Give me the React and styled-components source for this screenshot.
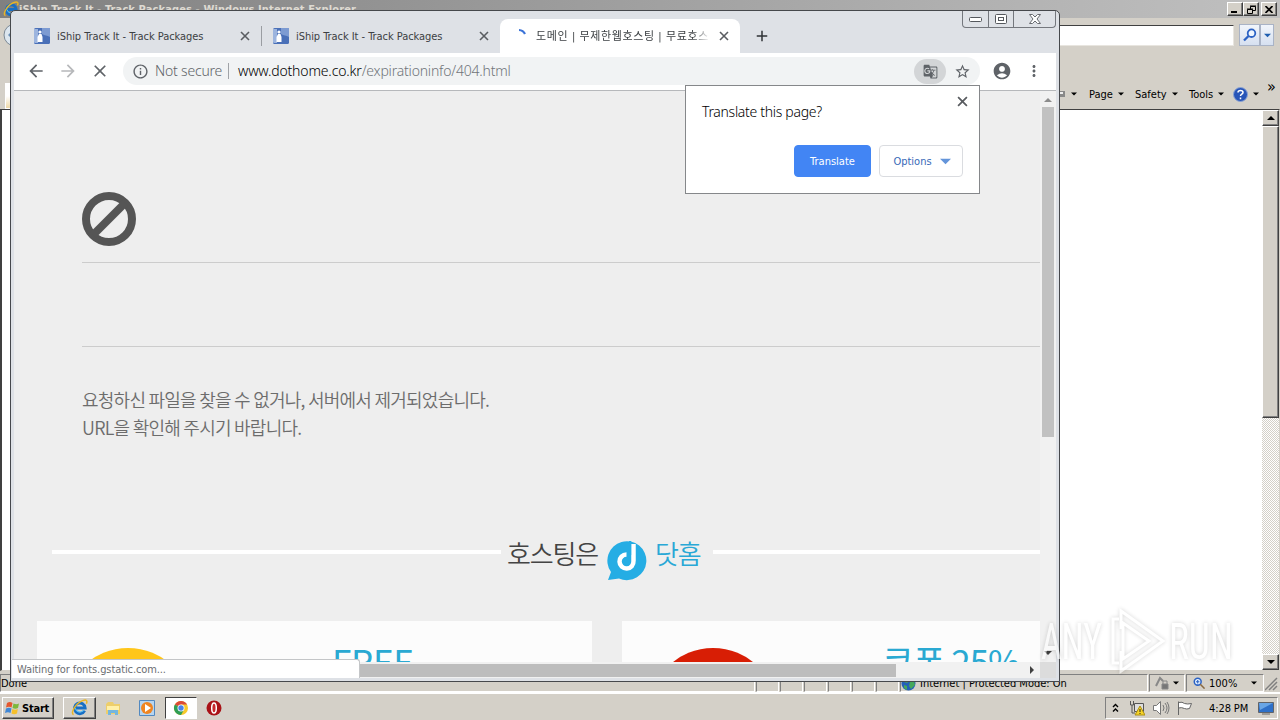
import React from 'react'
import styled, { createGlobalStyle, css } from 'styled-components'
import {
    MdArrowBack, MdArrowForward, MdClose, MdInfoOutline, MdGTranslate,
    MdStarBorder, MdAccountCircle, MdMoreVert, MdAdd
} from 'react-icons/md'

const GlobalStyle = createGlobalStyle`
    * {
        box-sizing: border-box;
    }

    body {
        margin: 0;
        overflow: hidden;
        font-family: 'DejaVu Sans Condensed', 'DejaVu Sans', 'Noto Sans CJK KR', sans-serif;
        font-stretch: condensed;
        font-size: 11px;
        line-height: 14px;
        color: #000;
    }

    svg {
        display: block;
        flex: none;
    }
`;

const raised = css`
    border: 1px solid;
    border-color: #fff #404040 #404040 #fff;
    box-shadow: inset -1px -1px 0 #808080;
`;

const Desktop = styled.div`
    position: relative;
    display: flex;
    flex-direction: column;
    width: 1280px;
    height: 720px;
    overflow: hidden;
    background: #d4d0c8;
`;

const Label = styled.span`
    flex: none;
    padding-top: 2px;
    white-space: nowrap;
    letter-spacing: ${props => props.$spacing || 0}px;
`;

/* Internet Explorer */

const ExplorerTitle = styled.div`
    display: flex;
    align-items: center;
    height: 18px;
    padding: 0 3px;
    background: linear-gradient(90deg, #808080, #c0c0c0);
    color: #dedad2;
    font-weight: bold;
`;

const TitleButtons = styled.div`
    display: flex;
    margin-left: auto;
`;

const TitleButton = styled.div`
    ${raised}
    display: flex;
    align-items: center;
    justify-content: center;
    width: 16px;
    height: 14px;
    margin-left: ${props => props.$gap || 0}px;
    background: #d4d0c8;
`;

const AddressRow = styled.div`
    display: flex;
    align-items: center;
    height: 34px;
    padding: 0 6px 0 3px;
`;

const SearchField = styled.div`
    width: 180px;
    height: 21px;
    margin: 0 5px 0 auto;
    background: #fff;
    border: 1px solid #e8e5df;
    border-top-color: #404040;
`;

const SearchButton = styled.div`
    display: flex;
    align-items: center;
    justify-content: center;
    width: ${props => props.$width}px;
    height: 22px;
    border: 1px solid #a9b3c6;
    background: linear-gradient(#f1f5fb, #d6e0f0);
`;

const CommandRow = styled.div`
    display: flex;
    align-items: flex-end;
    height: 57px;
    padding-left: 5px;
`;

const TabStub = styled.div`
    width: 30px;
    height: 26px;
    border: 1px solid #fff;
    background: linear-gradient(#fff 50%, #efd9a8);
`;

const Commands = styled.div`
    display: flex;
    align-items: center;
    height: 30px;
    margin-left: auto;
    width: 222px;
`;

const Command = styled.div`
    display: flex;
    align-items: center;
    gap: 5px;
    width: ${props => props.$width}px;
`;

const Spacer = styled.div`
    flex: none;
    width: ${props => props.$width}px;
`;

const Chevron = styled.span`
    margin: 3px 0 0 1px;
    font-size: 16px;
    line-height: 10px;
    align-self: flex-start;
    letter-spacing: -1px;
`;

const ExplorerPage = styled.div`
    display: flex;
    justify-content: flex-end;
    height: 562px;
    background: #fff;
    border: 1px solid #404040;
    border-width: 1px 1px 1px 2px;
    border-right-color: #d4d0c8;
    border-bottom-color: #d4d0c8;
`;

const ExplorerScroll = styled.div`
    display: flex;
    flex-direction: column;
    width: 17px;
    background: repeating-conic-gradient(#fff 0 25%, #d4d0c8 0 50%) 0 0 / 2px 2px;
`;

const ScrollPart = styled.div`
    ${raised}
    display: flex;
    align-items: center;
    justify-content: center;
    height: ${props => props.$height}px;
    margin-top: ${props => props.$push ? 'auto' : 0};
    background: #d4d0c8;
`;

const StatusBar = styled.div`
    display: flex;
    align-items: stretch;
    height: 22px;
    padding: 3px 0 0;
    border-bottom: 1px solid #fff;
`;

const StatusPane = styled.div`
    display: flex;
    align-items: center;
    gap: 4px;
    width: ${props => props.$width}px;
    padding-left: ${props => props.$inset || 0}px;
    border: 1px solid #808080;
    border-right-color: #fff;
    border-bottom-color: #fff;
    margin-right: 1px;
`;

/* Taskbar */

const Taskbar = styled.div`
    display: flex;
    align-items: center;
    height: 27px;
    padding: 1px 2px 0;
    border-top: 1px solid #fff;
`;

const StartButton = styled.div`
    ${raised}
    display: flex;
    align-items: center;
    gap: 2px;
    width: 52px;
    height: 22px;
    padding-left: 2px;
    font-weight: bold;
`;

const TaskItem = styled.div`
    display: flex;
    align-items: center;
    justify-content: center;
    width: ${props => props.$width || 34}px;
    height: 22px;
    margin-left: ${props => props.$gap || 0}px;
    ${props => props.$open && raised}
    ${props => props.$active && css`
        border: 1px solid;
        border-color: #404040 #fff #fff #404040;
        background: #fff;
    `}
`;

const Tray = styled.div`
    display: flex;
    align-items: center;
    width: 173px;
    height: 22px;
    margin-left: auto;
    padding-left: 6px;
    border: 1px solid;
    border-color: #808080 #fff #fff #808080;
`;

const Clock = styled.span`
    margin: 0 10px 0 15px;
    padding-top: 2px;
    letter-spacing: -0.1px;
    white-space: nowrap;
`;

/* Chrome */

const ChromeWindow = styled.div`
    position: absolute;
    left: 10px;
    top: 10px;
    display: flex;
    flex-direction: column;
    width: 1050px;
    height: 672px;
    padding: 0 3px 3px;
    overflow: hidden;
    border: 1px solid #46484c;
    border-radius: 5px 5px 1px 1px;
    background: #dee1e6;
`;

const TabStrip = styled.div`
    display: flex;
    align-items: flex-end;
    height: 42px;
    padding-left: 8px;
    color: #3c4043;
`;

const Tab = styled.div`
    display: flex;
    align-items: center;
    width: ${props => props.$active ? 240 : 239}px;
    height: 34px;
    padding: 0 11px 0 12px;
    border-radius: 8px 8px 0 0;
    background: ${props => props.$active ? '#fff' : 'transparent'};
`;

const TabTitle = styled.div`
    flex: 1;
    margin: 0 9px 0 7px;
    padding-top: 2px;
    overflow: hidden;
    white-space: nowrap;
    letter-spacing: -0.05px;
    ${props => props.$fade && css`
        margin: 0 9px 0 8px;
        letter-spacing: 0.6px;
        mask-image: linear-gradient(90deg, #000 90%, transparent);
    `}
`;

const TabDivider = styled.div`
    width: 1px;
    height: 20px;
    margin: 0 -1px 7px 0;
    background: #9a9da2;
`;

const NewTab = styled.div`
    padding: 0 0 8px 13px;
`;

const WindowButtons = styled.div`
    display: flex;
    align-self: flex-start;
    height: 17px;
    margin-left: auto;
    border: 1px solid #74777d;
    border-top: 0;
    border-radius: 0 0 4px 4px;
`;

const WindowButton = styled.div`
    display: flex;
    align-items: center;
    justify-content: center;
    width: ${props => props.$width}px;

    & + & {
        border-left: 1px solid #74777d;
    }
`;

const Toolbar = styled.div`
    display: flex;
    align-items: center;
    height: 38px;
    padding: 0 0 1px 13px;
    background: #fff;
    border-bottom: 1px solid #b6b8bb;
    color: #5f6368;
`;

const ToolIcon = styled.div`
    display: flex;
    justify-content: center;
    width: 32px;
    padding-right: 14px;
    opacity: ${props => props.$dim ? 0.45 : 1};
`;

const Omnibox = styled.div`
    display: flex;
    align-items: center;
    width: 857px;
    height: 28px;
    padding: 0 9px 0 9px;
    border-radius: 14px;
    background: #f1f3f4;
`;

const OmniText = styled.span`
    flex: none;
    font-family: 'Noto Sans', sans-serif;
    font-stretch: normal;
    font-weight: 300;
    font-size: 14px;
    line-height: 18px;
    white-space: nowrap;
    letter-spacing: ${props => props.$spacing}px;
    color: ${props => props.$color || '#5f6368'};
`;

const OmniDivider = styled.div`
    flex: none;
    width: 1px;
    height: 16px;
    margin: 0 9px 0 auto;
    background: #a0a3a7;
`;

const SecurityChip = styled.div`
    display: flex;
    align-items: center;
    gap: 6px;
    width: 106px;
`;

const TranslateBadge = styled.div`
    display: flex;
    align-items: center;
    justify-content: center;
    width: 32px;
    height: 25px;
    margin: 0 8px 0 auto;
    border-radius: 13px;
    background: #d3d5d7;
`;

const Viewport = styled.div`
    display: grid;
    grid-template-columns: 1026px 16px;
    grid-template-rows: 571px 16px;
    background: #dcdcdc;
`;

const Page = styled.div`
    overflow: hidden;
    background: #eee;
    font-family: 'Noto Sans CJK KR', sans-serif;
    font-weight: 300;
`;

const ErrorBlock = styled.div`
    padding: 101px 0 0 68px;
`;

const Rule = styled.div`
    height: ${props => props.$height}px;
    border-bottom: 1px solid #ccc;
`;

const Message = styled.p`
    margin: 38px 0 0;
    color: #6c6c6c;
    font-size: 18px;
    font-weight: 350;
    line-height: 28px;
    letter-spacing: -0.75px;
    white-space: nowrap;
`;

const BrandRow = styled.div`
    display: flex;
    align-items: center;
    height: 50px;
    margin: 86px 0 0 38px;
    font-size: 26px;
    line-height: 40px;
    white-space: nowrap;
`;

const BrandLine = styled.div`
    width: ${props => props.$width}px;
    flex: none;
    height: 4px;
    background: #fff;
`;

const BrandText = styled.span`
    flex: none;
    width: ${props => props.$width}px;
    margin-left: ${props => props.$left}px;
    padding-top: 2px;
    font-weight: 350;
    letter-spacing: -1.2px;
    color: ${props => props.$color};
`;

const BrandLogo = styled.svg`
    margin-top: 18px;
`;

const Cards = styled.div`
    display: flex;
    gap: 30px;
    margin: 44px 0 0 23px;
`;

const Card = styled.div`
    display: flex;
    flex: none;
    width: 555px;
    height: 200px;
    padding: 27px 0 0 27px;
    background: #fcfcfc;
`;

const Disc = styled.div`
    flex: none;
    width: 128px;
    height: 128px;
    border-radius: 50%;
    background: ${props => props.$color};
`;

const CardTitle = styled.div`
    margin: -9px 0 0 ${props => props.$left}px;
    color: #2aa9d2;
    font-size: 35px;
    line-height: 44px;
    font-weight: 400;
    letter-spacing: ${props => props.$spacing}px;
    white-space: nowrap;
`;

const VerticalBar = styled.div`
    display: flex;
    flex-direction: column;
    align-items: center;
    justify-content: space-between;
    padding: 5px 0 5px;
    background: #f1f1f1;
`;

const VerticalThumb = styled.div`
    width: 12px;
    height: 330px;
    margin: 3px 0 auto;
    background: #c1c1c1;
`;

const HorizontalBar = styled.div`
    display: flex;
    align-items: center;
    justify-content: space-between;
    padding-right: 4px;
    background: #f1f1f1;
`;

const HorizontalThumb = styled.div`
    width: 537px;
    height: 13px;
    margin-left: 345px;
    background: #bdbdbd;
`;

const StatusBubble = styled.div`
    position: absolute;
    left: 1px;
    bottom: 3px;
    width: 348px;
    height: 19px;
    padding: 3px 0 0 5px;
    border: solid #c4c6c8;
    border-width: 1px 1px 0 0;
    border-radius: 0 3px 0 0;
    background: #fff;
    color: #6a6d71;
    letter-spacing: -0.1px;
`;

const TranslateBubble = styled.div`
    position: absolute;
    left: 674px;
    top: 74px;
    display: flex;
    flex-direction: column;
    justify-content: space-between;
    width: 295px;
    height: 109px;
    padding: 7px 16px 16px;
    border: 1px solid #85878a;
    background: #fff;
`;

const BubbleHeader = styled.div`
    display: flex;
    justify-content: space-between;
    margin-right: -5px;
    color: #5a5d61;
`;

const BubbleClose = styled.div`
    padding-top: 3px;
`;

const BubbleTitle = styled.div`
    margin-top: 11px;
    color: #000;
    font-family: 'Noto Sans', sans-serif;
    font-stretch: normal;
    font-weight: 300;
    font-size: 14px;
    line-height: 16px;
    letter-spacing: -0.3px;
`;

const BubbleActions = styled.div`
    display: flex;
    justify-content: flex-end;
    gap: 8px;
`;

const BubbleButton = styled.div`
    display: flex;
    align-items: center;
    justify-content: center;
    gap: 8px;
    width: ${props => props.$primary ? 77 : 84}px;
    height: 32px;
    padding-left: ${props => props.$primary ? 0 : 2}px;
    border: 1px solid ${props => props.$primary ? '#4285f4' : '#dadce0'};
    border-radius: 4px;
    background: ${props => props.$primary ? '#4285f4' : '#fff'};
    color: ${props => props.$primary ? '#fff' : '#3769b8'};
`;

const Watermark = styled.div`
    position: absolute;
    left: 1036px;
    top: 605px;
    filter: drop-shadow(0 0 2px rgba(0, 0, 0, 0.28));
    opacity: 0.6;
`;

const Arrow = ({ dir = 'down', size = 7, color = '#000' }) => {
    const turn = { down: 0, up: 180, right: -90 }[dir];
    return (
        <svg width={size} height={size} viewBox="0 0 8 8">
            <path d="M0 2h8L4 6z" fill={color} transform={`rotate(${turn} 4 4)`} />
        </svg>
    );
};

const CloseIcon = ({ size = 10 }) => (
    <svg width={size} height={size} viewBox="0 0 10 10" stroke="#5a5d61" strokeWidth="1.600">
        <path d="M1 1l8 8M9 1L1 9" />
    </svg>
);

const IeIcon = ({ size = 16 }) => (
    <svg width={size} height={size} viewBox="0 0 16 16" fill="none">
        <path d="M12.8 11a5 5 0 1 1 .5-2.5H4.5" stroke="#176fc5" strokeWidth="2.8" />
        <path d="M12 10.500a4.500 4.500 0 0 1-8-2" stroke="#58bdf2" strokeWidth="1" />
        <path d="M2.500 14.500C-1 14 4 4 11 1.500c4-1.400 4.500.5 3.500 3" stroke="#e8b526" strokeWidth="1.400" />
    </svg>
);

const Favicon = () => (
    <svg width="16" height="16" viewBox="0 0 16 16">
        <rect width="16" height="16" rx="1.500" fill="#4a70b8" />
        <path d="M8 0h8v9C13 7 11 8 8 6z" fill="#7d9bd2" />
        <path d="M0 1h4v14H1q-1 0-1-1z" fill="#9cb4de" />
        <circle cx="6" cy="4" r="1.600" fill="#fff" />
        <path d="M5 6h2.500l1 3v5h-5V9z" fill="#fff" />
    </svg>
);

const ChromeIcon = () => (
    <svg width="16" height="16" viewBox="0 0 16 16">
        <circle cx="8" cy="8" r="7" fill="#f7c92c" />
        <path d="M8 8L1.900 4.500A7 7 0 0 1 14.100 4.500L8 4.500z" fill="#dc4a38" />
        <path d="M8 8L1.900 4.500A7 7 0 0 0 8 15L11 9.700z" fill="#2f9e55" />
        <circle cx="8" cy="8" r="3.500" fill="#fff" />
        <circle cx="8" cy="8" r="2.700" fill="#4a83e8" />
    </svg>
);

const WindowsFlag = () => (
    <svg width="15" height="16" viewBox="0 0 15 16">
        <path d="M2 3q3-2 5.500 0L6.500 7.500q-2.500-1.500-5.500 0z" fill="#e4572e" />
        <path d="M8.500 3.500q3 1.500 5.500 0L13 8q-2.500 1.500-5.500 0z" fill="#7db83a" />
        <path d="M1 8.500q3-1.500 5.500 0L5.500 13q-2.500-1.500-5.500 0z" fill="#3f87d6" />
        <path d="M7.300 9q3 1.500 5.500 0L12 13.500q-3 1.500-5.500 0z" fill="#f5c02b" />
    </svg>
);

const Globe = () => (
    <svg width="15" height="15" viewBox="0 0 15 15">
        <circle cx="7.500" cy="7.500" r="7" fill="#2460b8" />
        <path d="M3 3l4-2 2 3-3 3-3-1zM9 6l4-1 1 4-4 4-2-3zM3 9l3 1v4l-3-2z" fill="#45a85a" />
    </svg>
);

const SearchGlass = ({ size = 14, plus }) => (
    <svg width={size} height={size} viewBox="0 0 14 14" fill="none" stroke="#2b62c4" strokeWidth="1.800">
        {
            plus
                ? <><circle cx="5.500" cy="5.500" r="4" fill="#e5f1ff" /><path d="M3.500 5.500h4M5.500 3.500v4" strokeWidth="1.300" /><path d="M8.500 8.500l5 5" stroke="#8a6a42" /></>
                : <><circle cx="8.500" cy="5.200" r="3.800" fill="#eef6ff" /><path d="M5.500 8L1 12.500" strokeWidth="2.300" /></>
        }
    </svg>
);

const tabs = [
    { title: 'iShip Track It - Track Packages' },
    { title: 'iShip Track It - Track Packages' },
    { title: '도메인 | 무제한웹호스팅 | 무료호스', active: true },
];

const commands = [
    { title: 'Page', width: 46 },
    { title: 'Safety', width: 54 },
    { title: 'Tools', width: 44 },
];

const cards = [
    { title: 'FREE', color: '#ffc61a', left: 140, spacing: -0.3 },
    { title: '쿠폰 25%', color: '#d81e05', left: 105, spacing: -1 },
];

const Explorer = () => (
    <>
        <ExplorerTitle>
            <IeIcon />
            <Label $spacing={0.12}>iShip Track It - Track Packages - Windows Internet Explorer</Label>
            <TitleButtons>
                <TitleButton><svg width="8" height="8"><path d="M0 6h6v2H0z" /></svg></TitleButton>
                <TitleButton>
                    <svg width="9" height="9" fill="none" stroke="#000"><path d="M3.500 4V1.500h5v4H6M3 1h6M.5 4.500h5v4h-5zM0 4h6" /></svg>
                </TitleButton>
                <TitleButton $gap={2}>
                    <svg width="8" height="7" stroke="#000" strokeWidth="1.700"><path d="M.5 0l7 7M7.500 0l-7 7" /></svg>
                </TitleButton>
            </TitleButtons>
        </ExplorerTitle>
        <AddressRow>
            <svg width="22" height="24"><circle cx="12" cy="12" r="11" fill="#dce6ef" stroke="#7c8995" /><path d="M5 12l5-5v10z" fill="#6c8fb4" /></svg>
            <SearchField />
            <SearchButton $width={21}><SearchGlass /></SearchButton>
            <SearchButton $width={14}><Arrow color="#1f5fb0" /></SearchButton>
        </AddressRow>
        <CommandRow>
            <TabStub />
            <Commands>
                <Command $width={31}>
                    <svg width="8" height="10"><path d="M0 2h7v6H0z" fill="#888" /><path d="M1 3h4v2H1z" fill="#eee" /></svg>
                    <Arrow size={6} />
                </Command>
                {
                    commands.map(item => (
                        <Command key={item.title} $width={item.width}>
                            <Label>{item.title}</Label>
                            <Arrow size={6} />
                        </Command>
                    ))
                }
                <Command $width={33}>
                    <svg width="15" height="15" viewBox="0 0 15 15">
                        <circle cx="7.500" cy="7.500" r="7" fill="#2855b8" stroke="#8ba3d4" />
                        <path d="M5 5.500q0-2 2.500-2t2.500 2q0 1.200-1.500 1.800-1 .5-1 1.700M7.500 10.500v1.700" stroke="#fff" strokeWidth="1.500" fill="none" />
                    </svg>
                    <Arrow size={6} />
                </Command>
                <Chevron>»</Chevron>
            </Commands>
        </CommandRow>
        <ExplorerPage>
            <ExplorerScroll>
                <ScrollPart $height={16}><Arrow dir="up" size={8} /></ScrollPart>
                <ScrollPart $height={292} />
                <ScrollPart $height={16} $push><Arrow size={8} /></ScrollPart>
            </ExplorerScroll>
        </ExplorerPage>
        <StatusBar>
            <StatusPane $width={755}><Label>Done</Label></StatusPane>
            {[1, 2, 3, 4, 5].map(n => <StatusPane key={n} $width={23} />)}
            <StatusPane $width={23} />
            <StatusPane $width={248}>
                <Globe />
                <Label>Internet | Protected Mode: On</Label>
            </StatusPane>
            <StatusPane $width={36} $inset={5}>
                <svg width="14" height="14" fill="none" stroke="#888"><path d="M1 10l4-8 3 3" strokeWidth="2" /><path d="M7 8h6v5H7z" fill="#777" /><path d="M8 8V5h4v3" /></svg>
                <Arrow size={6} />
            </StatusPane>
            <StatusPane $width={78} $inset={6}>
                <SearchGlass plus size={12} />
                <Label>100%</Label>
                <Spacer $width={6} />
                <Arrow size={6} />
            </StatusPane>
            <svg width="13" height="17" stroke="#808080" strokeWidth="1.500"><path d="M0 16L12 4M4 16l8-8M8 16l4-4" /></svg>
        </StatusBar>
    </>
);

const ChromeHead = () => (
    <>
        <TabStrip>
            {
                tabs.map((tab, index) => (
                    <React.Fragment key={index}>
                        <Tab $active={tab.active}>
                            {
                                tab.active
                                    ? <svg width="16" height="16"><path d="M7 2a7 7 0 0 1 6 4" stroke="#3b73d8" strokeWidth="2.200" fill="none" /></svg>
                                    : <Favicon />
                            }
                            <TabTitle $fade={tab.active}>{tab.title}</TabTitle>
                            <CloseIcon />
                        </Tab>
                        {index === 0 && <TabDivider />}
                    </React.Fragment>
                ))
            }
            <NewTab><MdAdd size={18} color="#2f3236" /></NewTab>
            <WindowButtons>
                <WindowButton $width={25}><svg width="13" height="5"><rect x=".5" y=".5" width="12" height="4" rx="1" fill="#fff" stroke="#55585d" /></svg></WindowButton>
                <WindowButton $width={25}>
                    <svg width="12" height="10" fill="#fff" stroke="#55585d"><rect x=".5" y=".5" width="11" height="9" rx="1" /><rect x="3.500" y="3.500" width="5" height="3" /></svg>
                </WindowButton>
                <WindowButton $width={42}>
                    <svg width="12" height="10" viewBox="0 0 12 10" fill="#fff" stroke="#686b70"><path d="M.5.5h3L6 3 8.500.5h3L8 5l3.500 4.500h-3L6 7 3.500 9.500h-3L4 5z" /></svg>
                </WindowButton>
            </WindowButtons>
        </TabStrip>
        <Toolbar>
            <ToolIcon><MdArrowBack size={20} /></ToolIcon>
            <ToolIcon $dim><MdArrowForward size={20} /></ToolIcon>
            <ToolIcon><MdClose size={20} /></ToolIcon>
            <Omnibox>
                <SecurityChip>
                    <MdInfoOutline size={17} />
                    <OmniText $spacing={-0.2}>Not secure</OmniText>
                    <OmniDivider />
                </SecurityChip>
                <OmniText $spacing={-0.15} $color="#000">www.dothome.co.kr</OmniText>
                <OmniText $spacing={-0.2} $color="#70757a">/expirationinfo/404.html</OmniText>
                <TranslateBadge><MdGTranslate size={15} /></TranslateBadge>
                <MdStarBorder size={17} />
            </Omnibox>
            <Spacer $width={12} />
            <MdAccountCircle size={20} />
            <Spacer $width={13} />
            <MdMoreVert size={18} />
        </Toolbar>
    </>
);

const DothomePage = () => (
    <Page>
        <ErrorBlock>
            <svg width="54" height="54" fill="none" stroke="#555" strokeWidth="8">
                <circle cx="27" cy="27" r="23" />
                <path d="M11 43L43 11" />
            </svg>
            <Rule $height={17} />
            <Rule $height={84} />
            <Message>
                요청하신 파일을 찾을 수 없거나, 서버에서 제거되었습니다.<br />
                URL을 확인해 주시기 바랍니다.
            </Message>
        </ErrorBlock>
        <BrandRow>
            <BrandLine $width={449} />
            <BrandText $left={6} $width={100} $color="#444">호스팅은</BrandText>
            <BrandLogo width="40" height="40" viewBox="0 0 40 40">
                <path d="M1 39l3-8A19.500 19.500 0 1 1 12 37.500z" fill="#25ade4" />
                <path d="M26.500 3v17a7 7 0 1 1-7-6.500" fill="none" stroke="#fff" strokeWidth="4.500" />
                <path d="M22 0h2.200v14H22z" fill="#25ade4" />
            </BrandLogo>
            <BrandText $left={8} $width={58} $color="#29a8d6">닷홈</BrandText>
            <BrandLine $width={340} />
        </BrandRow>
        <Cards>
            {
                cards.map(card => (
                    <Card key={card.title}>
                        <Disc $color={card.color} />
                        <CardTitle $left={card.left} $spacing={card.spacing}>{card.title}</CardTitle>
                    </Card>
                ))
            }
        </Cards>
    </Page>
);

const App = () => (
    <Desktop>
        <GlobalStyle />
        <Explorer />
        <Taskbar>
            <StartButton><WindowsFlag /><Label $spacing={-0.2}>Start</Label></StartButton>
            <TaskItem $open $width={33} $gap={9}><IeIcon size={17} /></TaskItem>
            <TaskItem>
                <svg width="16" height="16"><path d="M1 4l2-2h5l1 2h6v10H1z" fill="#edce6b" /><path d="M2 6h12v4H2z" fill="#fff0a8" /><path d="M3 15v-5h10v5h-3v-2H6v2z" fill="#74b6de" /></svg>
            </TaskItem>
            <TaskItem>
                <svg width="16" height="16"><path d="M.5.5h15v15H.5z" fill="#b6d5f0" stroke="#5289c0" /><circle cx="8" cy="8" r="6" fill="#ef8521" /><path d="M6 4l6 4-6 4z" fill="#fff" /></svg>
            </TaskItem>
            <TaskItem $active $width={32} $gap={1}><ChromeIcon /></TaskItem>
            <TaskItem>
                <svg width="16" height="16"><circle cx="8" cy="8" r="7.500" fill="#a91217" /><ellipse cx="8" cy="8" rx="2.300" ry="5" fill="#c8282c" stroke="#fff" strokeWidth="1.500" /></svg>
            </TaskItem>
            <Tray>
                <svg width="7" height="10" fill="none" stroke="#000" strokeWidth="1.400"><path d="M1 4l2.500-2.500L6 4M1 8.500L3.500 6 6 8.500" /></svg>
                <Spacer $width={10} />
                <svg width="16" height="16" fill="none" stroke="#555"><path d="M1.500 1v4h3V1M3 5v8h3" /><path d="M5.500 3.500h9v8h-9z" fill="#ddd" /><path d="M11 6l5 9H6z" fill="#f6d327" stroke="#ac8e12" /><path d="M11 9v3M11 13v1" stroke="#222" /></svg>
                <Spacer $width={8} />
                <svg width="17" height="16" fill="none" stroke="#777"><path d="M.5 5.500h3l4-4v13l-4-4h-3z" fill="#fff" /><path d="M10 5q2 3 0 6M12 3q4 5 0 10M14 2q4 6 0 12" /></svg>
                <Spacer $width={7} />
                <svg width="17" height="16" fill="#fff" stroke="#666"><path d="M1.500 15V1.500M1.500 2.500q4-1 6 1 3 1 7 0l-2 5q-3 1-5 0-3-1.500-6-.5" /></svg>
                <Clock>4:28 PM</Clock>
                <svg width="16" height="14"><path d="M.5 1.500h15v10H.5z" fill="#2e70c8" stroke="#60646a" /><path d="M1 2h14L2 9z" fill="#69a6e6" /><path d="M4 13h8" stroke="#666" /></svg>
            </Tray>
        </Taskbar>
        <ChromeWindow>
            <ChromeHead />
            <Viewport>
                <DothomePage />
                <VerticalBar>
                    <Arrow dir="up" size={8} color="#8c8c8c" />
                    <VerticalThumb />
                    <Arrow size={8} color="#404040" />
                </VerticalBar>
                <HorizontalBar>
                    <HorizontalThumb />
                    <Arrow dir="right" size={8} color="#404040" />
                </HorizontalBar>
            </Viewport>
            <StatusBubble>Waiting for fonts.gstatic.com...</StatusBubble>
            <TranslateBubble>
                <BubbleHeader>
                    <BubbleTitle>Translate this page?</BubbleTitle>
                    <BubbleClose><CloseIcon size={11} /></BubbleClose>
                </BubbleHeader>
                <BubbleActions>
                    <BubbleButton $primary><Label>Translate</Label></BubbleButton>
                    <BubbleButton><Label>Options</Label><Arrow size={11} color="#6495da" /></BubbleButton>
                </BubbleActions>
            </TranslateBubble>
        </ChromeWindow>
        <Watermark>
            <svg width="200" height="72" viewBox="0 0 200 72" fill="#fff" fontFamily="Roboto, sans-serif" fontSize="50">
                <text x="5" y="54" textLength="61" lengthAdjust="spacingAndGlyphs">ANY</text>
                <path d="M83 58h-6V14h6M85 24V6l42 30-42 30V46M87 18l26 18-26 18z" fill="none" stroke="#fff" strokeWidth="3" />
                <text x="133" y="54" textLength="64" lengthAdjust="spacingAndGlyphs">RUN</text>
            </svg>
        </Watermark>
    </Desktop>
);

export default App;
